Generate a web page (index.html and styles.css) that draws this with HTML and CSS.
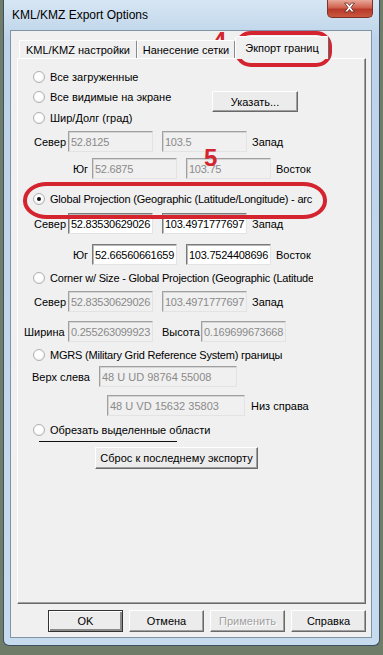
FILE: index.html
```html
<!DOCTYPE html>
<html lang="ru">

<head>
    <meta charset="UTF-8">
    <meta name="viewport" content="width=device-width, initial-scale=1.0">
    <title>KML/KMZ Export Options</title>
    <link rel="stylesheet" href="styles.css">
</head>

<body>
    <div class="window">
        <div class="titlebar">
            <span class="title">KML/KMZ Export Options</span>
            <div class="close-btn">
                <svg width="46" height="18" viewBox="0 0 46 18">
                    <path d="M18 4 L21 4 L23 6.5 L25 4 L28 4 L24.5 8.5 L28 13 L25 13 L23 10.5 L21 13 L18 13 L21.5 8.5 Z" fill="#fff" stroke="#5a2018" stroke-width="0.8" stroke-linejoin="round" />
                </svg>
            </div>
        </div>

        <div class="client">
            <div class="tabs">
                <div class="tab tab-first">KML/KMZ настройки</div>
                <div class="tab tab-second">Нанесение сетки</div>
                <div class="tab active">Экпорт границ</div>
            </div>

            <div class="panel">
                <div class="rows">
                    <div class="opt"><span class="radio"></span>Все загруженные</div>
                    <div class="opt">
                        <span class="radio"></span>Все видимые на экране
                        <button class="btn btn-pick">Указать...</button>
                    </div>
                    <div class="opt m7"><span class="radio"></span>Шир/Долг (град)</div>
                    <div class="line north">
                        <span class="lbl">Север</span>
                        <input class="field" value="52.8125" disabled>
                        <input class="field" value="103.5" disabled>
                        <span class="unit">Запад</span>
                    </div>
                    <div class="line south">
                        <span class="lbl">Юг</span>
                        <input class="field" value="52.6875" disabled>
                        <input class="field" value="103.75" disabled>
                        <span class="unit">Восток</span>
                    </div>

                    <div class="opt m13 latin"><span class="radio checked"></span>Global Projection (Geographic (Latitude/Longitude) - arc</div>
                    <div class="line north m7">
                        <span class="lbl">Север</span>
                        <input class="field on" value="52.83530629026">
                        <input class="field on" value="103.4971777697">
                        <span class="unit">Запад</span>
                    </div>
                    <div class="line south m10">
                        <span class="lbl">Юг</span>
                        <input class="field on" value="52.66560661659">
                        <input class="field on" value="103.7524408696">
                        <span class="unit">Восток</span>
                    </div>

                    <div class="opt latin"><span class="radio"></span><span class="clip">Corner w/ Size - Global Projection (Geographic (Latitude, Longitude)) - arc</span></div>
                    <div class="line north">
                        <span class="lbl">Север</span>
                        <input class="field" value="52.83530629026" disabled>
                        <input class="field" value="103.4971777697" disabled>
                        <span class="unit">Запад</span>
                    </div>
                    <div class="line size m9">
                        <span class="lbl">Ширина</span>
                        <input class="field" value="0.255263099923" disabled>
                        <span class="lbl lbl-mid">Высота</span>
                        <input class="field" value="0.169699673668" disabled>
                    </div>

                    <div class="opt latin"><span class="radio"></span>MGRS (Military Grid Reference System) границы</div>
                    <div class="line mgrs-top m4">
                        <span class="lbl">Верх слева</span>
                        <input class="field wide" value="48 U UD 98764 55008" disabled>
                    </div>
                    <div class="line mgrs-bottom m8">
                        <input class="field wide" value="48 U VD 15632 35803" disabled>
                        <span class="unit unit-far">Низ справа</span>
                    </div>

                    <div class="opt m7"><span class="radio"></span>Обрезать выделенные области</div>
                    <div class="sep"></div>
                    <button class="btn btn-reset">Сброс к последнему экспорту</button>
                </div>
            </div>

            <div class="dialog-buttons">
                <button class="btn btn-dlg default">OK</button>
                <button class="btn btn-dlg">Отмена</button>
                <button class="btn btn-dlg" disabled>Применить</button>
                <button class="btn btn-dlg">Справка</button>
            </div>
        </div>

        <!-- red marks drawn over the screenshot -->
        <div class="mark mark-tab"></div>
        <div class="mark-num num-4">4</div>
        <div class="mark-num num-5">5</div>
        <div class="mark mark-option"></div>
    </div>
</body>
</html>
```

FILE: styles.css
```css
body {
    margin: 0;
    width: 383px;
    height: 655px;
    overflow: hidden;
    background-color: #6f7d68;
    font-family: 'Liberation Sans', Arial, sans-serif;
    font-size: 11px;
    color: #000;
}

.window {
    position: relative;
    box-sizing: border-box;
    width: 377px;
    height: 646px;
    margin-left: 3px;
    padding: 0 7px 7px 6px;
    border: 1px solid #3d4f63;
    border-top: none;
    border-radius: 0 0 6px 6px;
    background: linear-gradient(#d6e6f4, #bdd3e9 40px, #c7dbee);
    display: flex;
    flex-direction: column;
}

.titlebar {
    height: 30px;
    display: flex;
    align-items: flex-start;
    flex: none;
}

.title {
    font-size: 12px;
    margin: 8px 0 0 2px;
}

.close-btn {
    margin-left: auto;
    margin-right: -1px;
    width: 46px;
    height: 18px;
    box-sizing: border-box;
    border: 1px solid #7a3328;
    border-top: none;
    border-radius: 0 0 5px 5px;
    background: linear-gradient(#e9a89a, #d0614f 45%, #b8392a 55%, #c9583f);
    display: flex;
    align-items: center;
    justify-content: center;
}

.close-btn svg {
    display: block;
    margin: -1px 0 0 -1px;
}

.client {
    flex: 1;
    border: 1px solid #8094a8;
    background-color: #f0f0f0;
    padding-top: 5px;
    display: flex;
    flex-direction: column;
}

/* tabs */

.tabs {
    display: flex;
    align-items: flex-end;
    height: 23px;
    padding-left: 8px;
    margin-bottom: -1px;
    position: relative;
    z-index: 1;
}

.tab {
    box-sizing: border-box;
    height: 18px;
    margin-bottom: 1px;
    padding-top: 2px;
    border: 1px solid;
    border-color: #fff #8a8a8a transparent #fff;
    border-bottom: none;
    border-radius: 2px 2px 0 0;
    background-color: #f0f0f0;
    text-align: center;
    line-height: 14px;
    white-space: nowrap;
}

.tab-first {
    width: 118px;
}

.tab-second {
    width: 98px;
}

.tab.active {
    width: 94px;
    height: 23px;
    margin-bottom: 0;
    padding-top: 4px;
    border-color: #fff #696969 transparent #fff;
}

.panel {
    box-sizing: border-box;
    height: 546px;
    margin: 0 5px 0 6px;
    border: 1px solid;
    border-color: #fff #696969 #696969 #fff;
    box-shadow: inset -1px -1px #a0a0a0;
    background-color: #f0f0f0;
}

.rows {
    display: flex;
    flex-direction: column;
    align-items: flex-start;
    padding: 5px 0 0 15px;
}

.opt {
    display: flex;
    align-items: center;
    height: 14px;
    margin-top: 6px;
    white-space: nowrap;
    align-self: stretch;
}

.latin {
    letter-spacing: -0.2px;
}

.clip {
    width: 263px;
    overflow: hidden;
}

.radio {
    box-sizing: border-box;
    width: 12px;
    height: 12px;
    flex: none;
    margin-right: 5px;
    border: 1px solid #b0b0b0;
    border-radius: 50%;
    background: radial-gradient(circle at 45% 40%, #fff 40%, #e6e6e6);
    display: flex;
    align-items: center;
    justify-content: center;
}

.radio.checked::after {
    content: '';
    width: 4px;
    height: 4px;
    border-radius: 50%;
    background-color: #111;
}

.line {
    display: flex;
    align-items: center;
    height: 21px;
    margin-top: 6px;
    white-space: nowrap;
}

.lbl {
    flex: none;
}

.north {
    padding-left: 1px;
}

.north .lbl {
    width: 34px;
}

.south {
    padding-left: 40px;
}

.south .lbl {
    width: 19px;
}

.size {
    margin-left: -9px;
}

.size .lbl {
    width: 44px;
}

.size .lbl-mid {
    width: 39px;
    margin-left: 9px;
}

.mgrs-top {
    margin-left: -1px;
}

.mgrs-top .lbl {
    width: 67px;
}

.mgrs-bottom {
    padding-left: 74px;
}

.field {
    box-sizing: border-box;
    width: 85px;
    height: 21px;
    margin: 0;
    padding: 0 0 0 2px;
    border: 1px solid;
    border-color: #a0a0a0 #e3e3e3 #e3e3e3 #a0a0a0;
    box-shadow: inset 1px 1px #d4d4d4;
    background-color: #f0f0f0;
    color: #8a8a8a;
    font: inherit;
    letter-spacing: -0.25px;
    outline: none;
}

.field + .field {
    margin-left: 9px;
}

.field.on {
    background-color: #fff;
    color: #000;
    border-color: #7a7a7a #e3e3e3 #e3e3e3 #7a7a7a;
    box-shadow: inset 1px 1px #b8b8b8;
}

.field.wide {
    width: 138px;
    letter-spacing: 0;
}

.unit {
    margin-left: 5px;
}

.unit-far {
    margin-left: 6px;
}

.m4 { margin-top: 4px; }
.m7 { margin-top: 7px; }
.m8 { margin-top: 8px; }
.m9 { margin-top: 9px; }
.m10 { margin-top: 10px; }
.m13 { margin-top: 13px; }

.sep {
    width: 138px;
    height: 1px;
    margin: 4px 0 0 6px;
    background-color: #111;
}

/* buttons */

.btn {
    box-sizing: border-box;
    margin: 0;
    padding: 0;
    border: 1px solid;
    border-color: #fff #696969 #696969 #fff;
    box-shadow: inset -1px -1px #a0a0a0;
    background-color: #ececec;
    color: #000;
    font: inherit;
    white-space: nowrap;
}

.btn:disabled {
    color: #a0a0a0;
    text-shadow: 1px 1px #fff;
}

.btn-pick {
    width: 86px;
    height: 21px;
    align-self: flex-start;
    margin: 1px 67px 0 auto;
}

.btn-reset {
    width: 163px;
    height: 22px;
    margin: 5px 0 0 62px;
}

.dialog-buttons {
    display: flex;
    justify-content: flex-end;
    gap: 6px;
    margin: 6px 5px 0 0;
}

.btn-dlg {
    width: 75px;
    height: 22px;
}

.btn-dlg.default {
    border-color: #333;
    box-shadow: inset 1px 1px #fff, inset -2px -2px #8a8a8a;
}

/* red annotation marks */

.mark {
    position: absolute;
    box-sizing: border-box;
    border: 4px solid #d42430;
}

.mark-tab {
    left: 231px;
    top: 31px;
    width: 97px;
    height: 36px;
    border-radius: 16px / 15px;
}

.mark-option {
    left: 19px;
    top: 182px;
    width: 304px;
    height: 37px;
    border-radius: 24px / 18px;
}

.mark-num {
    position: absolute;
    color: #d42430;
    font-family: 'Liberation Sans', Arial, sans-serif;
    font-weight: bold;
    font-size: 24px;
    line-height: 24px;
}

.num-4 {
    left: 209px;
    top: 29px;
}

.num-5 {
    left: 200px;
    top: 146px;
}
```
